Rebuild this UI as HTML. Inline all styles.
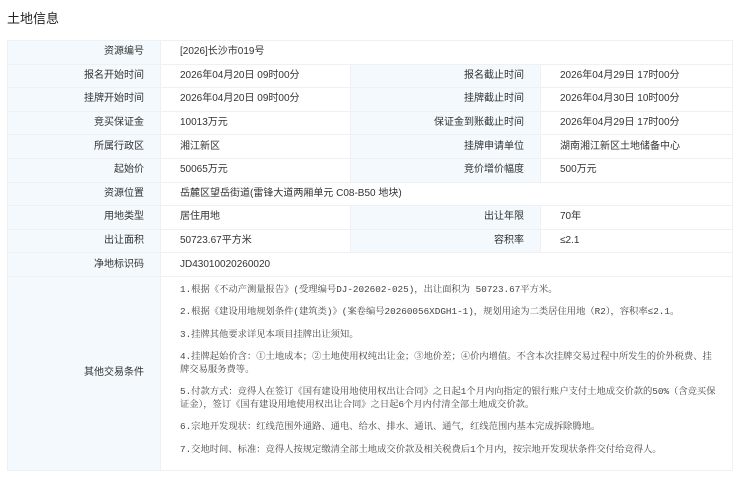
<!DOCTYPE html>
<html><head><meta charset="utf-8"><style>
body{margin:0;background:#fff;font-family:"Liberation Sans","Noto Sans CJK SC",sans-serif;color:#333;width:740px;height:477px;overflow:hidden;position:relative}
h1{position:absolute;left:7px;top:11px;margin:0;font-size:13px;font-weight:normal;color:#222;line-height:16px}
table{position:absolute;left:7px;top:40px;width:725px;border-collapse:collapse;font-size:10px;table-layout:fixed}
td{border:1px solid #eef0f3;height:22.6px;padding:0;line-height:12px}
td.l{background:#f3f9fd;text-align:right;padding-right:16px}
td.v{padding-left:19px}
td.big{padding:6px 14px 0 19px;vertical-align:top;height:187px;font-family:"Liberation Mono","Noto Serif CJK SC",serif;font-size:9.3px;color:#444}
td.big p{margin:0 0 9.3px;line-height:13px}
</style></head><body>
<h1>土地信息</h1>
<table>
<colgroup><col style="width:153px"><col style="width:190px"><col style="width:190px"><col style="width:192px"></colgroup>
<tr><td class="l">资源编号</td><td class="v" colspan="3">[2026]长沙市019号</td></tr>
<tr><td class="l">报名开始时间</td><td class="v">2026年04月20日 09时00分</td><td class="l">报名截止时间</td><td class="v">2026年04月29日 17时00分</td></tr>
<tr><td class="l">挂牌开始时间</td><td class="v">2026年04月20日 09时00分</td><td class="l">挂牌截止时间</td><td class="v">2026年04月30日 10时00分</td></tr>
<tr><td class="l">竞买保证金</td><td class="v">10013万元</td><td class="l">保证金到账截止时间</td><td class="v">2026年04月29日 17时00分</td></tr>
<tr><td class="l">所属行政区</td><td class="v">湘江新区</td><td class="l">挂牌申请单位</td><td class="v">湖南湘江新区土地储备中心</td></tr>
<tr><td class="l">起始价</td><td class="v">50065万元</td><td class="l">竞价增价幅度</td><td class="v">500万元</td></tr>
<tr><td class="l">资源位置</td><td class="v" colspan="3">岳麓区望岳街道(雷锋大道两厢单元 C08-B50 地块)</td></tr>
<tr><td class="l">用地类型</td><td class="v">居住用地</td><td class="l">出让年限</td><td class="v">70年</td></tr>
<tr><td class="l">出让面积</td><td class="v">50723.67平方米</td><td class="l">容积率</td><td class="v">≤2.1</td></tr>
<tr><td class="l">净地标识码</td><td class="v" colspan="3">JD43010020260020</td></tr>
<tr><td class="l">其他交易条件</td><td class="big" colspan="3">
<p>1.根据《不动产测量报告》(受理编号DJ-202602-025)，出让面积为 50723.67平方米。</p>
<p>2.根据《建设用地规划条件(建筑类)》(案卷编号20260056XDGH1-1)，规划用途为二类居住用地（R2），容积率≤2.1。</p>
<p>3.挂牌其他要求详见本项目挂牌出让须知。</p>
<p>4.挂牌起始价含：①土地成本；②土地使用权纯出让金；③地价差；④价内增值。不含本次挂牌交易过程中所发生的价外税费、挂牌交易服务费等。</p>
<p>5.付款方式：竞得人在签订《国有建设用地使用权出让合同》之日起1个月内向指定的银行账户支付土地成交价款的50%（含竞买保证金），签订《国有建设用地使用权出让合同》之日起6个月内付清全部土地成交价款。</p>
<p>6.宗地开发现状：红线范围外通路、通电、给水、排水、通讯、通气，红线范围内基本完成拆除腾地。</p>
<p>7.交地时间、标准：竞得人按规定缴清全部土地成交价款及相关税费后1个月内，按宗地开发现状条件交付给竞得人。</p>
</td></tr>
</table>
</body></html>
